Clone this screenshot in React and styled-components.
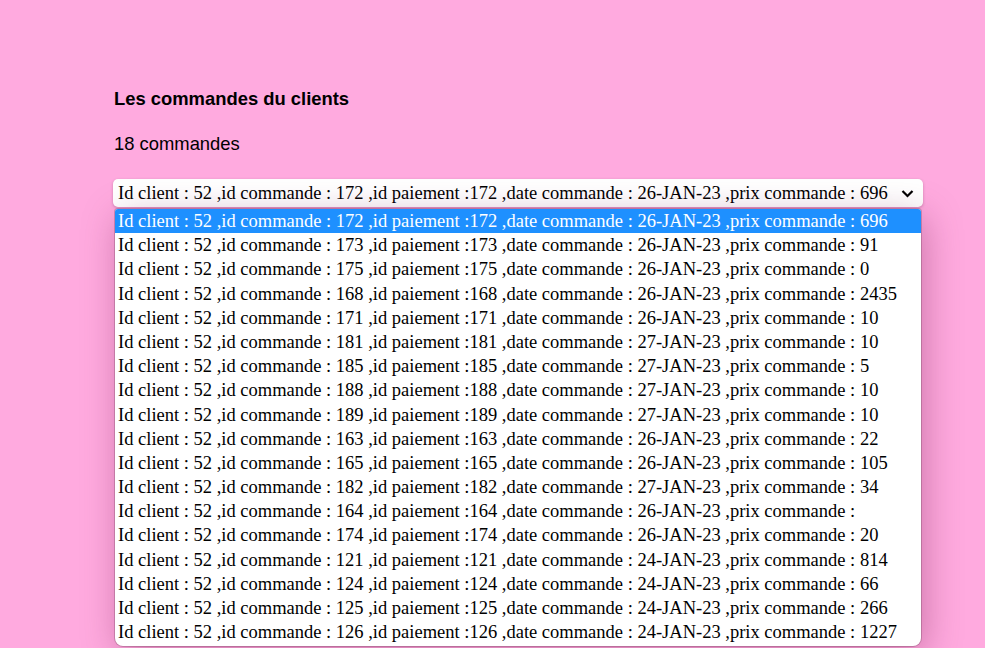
import styled, { createGlobalStyle } from "styled-components";

const GlobalStyle = createGlobalStyle`
  html, body {
    margin: 0;
    padding: 0;
    background: #ffaadf;
    height: 100%;
    overflow: hidden;
  }
`;

const commandes = [
  [172, "26-JAN-23", "696"],
  [173, "26-JAN-23", "91"],
  [175, "26-JAN-23", "0"],
  [168, "26-JAN-23", "2435"],
  [171, "26-JAN-23", "10"],
  [181, "27-JAN-23", "10"],
  [185, "27-JAN-23", "5"],
  [188, "27-JAN-23", "10"],
  [189, "27-JAN-23", "10"],
  [163, "26-JAN-23", "22"],
  [165, "26-JAN-23", "105"],
  [182, "27-JAN-23", "34"],
  [164, "26-JAN-23", ""],
  [174, "26-JAN-23", "20"],
  [121, "24-JAN-23", "814"],
  [124, "24-JAN-23", "66"],
  [125, "24-JAN-23", "266"],
  [126, "24-JAN-23", "1227"],
];

const label = (c) =>
  `Id client : 52 ,id commande : ${c[0]} ,id paiement :${c[0]} ,date commande : ${c[1]} ,prix commande : ${c[2]}`;

const Page = styled.div`
  padding: 88px 0 0 114px;
  font-family: "Liberation Sans", Arial, sans-serif;
  color: #000;
`;

const Title = styled.h3`
  margin: 0;
  font-size: 18.4px;
  font-weight: bold;
  line-height: 22px;
`;

const Count = styled.p`
  margin: 23px 0 0;
  font-size: 18.4px;
  line-height: 22px;
`;

const SelectWrap = styled.div`
  position: relative;
  margin: 24px 0 0 -1px;
  width: 810px;
`;

const SelectBox = styled.div`
  display: flex;
  align-items: center;
  justify-content: space-between;
  height: 28px;
  padding: 0 4px 0 5px;
  box-sizing: border-box;
  background: #fff;
  border-radius: 5px;
  box-shadow: 0 1px 3px rgba(60, 0, 30, 0.25);
  font-family: "Liberation Serif", "Times New Roman", serif;
  font-size: 18.5px;
  white-space: nowrap;
`;

const Chevron = styled.svg`
  width: 13px;
  height: 9px;
  margin-right: 5px;
`;

const List = styled.ul`
  position: absolute;
  top: 30px;
  left: 2px;
  width: 806px;
  margin: 0;
  padding: 0 0 2px;
  list-style: none;
  background: #fff;
  border-radius: 3px 3px 8px 8px;
  box-shadow: 0 0 0 1px rgba(80, 40, 60, 0.25), 4px 8px 36px rgba(110, 20, 70, 0.35);
  overflow: hidden;
`;

const Option = styled.li`
  height: 24.2px;
  line-height: 24px;
  padding-left: 3px;
  font-family: "Liberation Serif", "Times New Roman", serif;
  font-size: 18.5px;
  white-space: nowrap;
  background: ${(p) => (p.$selected ? "#1e90ff" : "transparent")};
  color: ${(p) => (p.$selected ? "#fff" : "#000")};
`;

export default function App() {
  return (
    <>
      <GlobalStyle />
      <Page>
        <Title>Les commandes du clients</Title>
        <Count>18 commandes</Count>
        <SelectWrap>
          <SelectBox>
            <span>{label(commandes[0])}</span>
            <Chevron viewBox="0 0 13 9">
              <path d="M1.5 2 L6.5 7 L11.5 2" fill="none" stroke="#000" strokeWidth="2.2" />
            </Chevron>
          </SelectBox>
          <List>
            {commandes.map((c, i) => (
              <Option key={c[0]} $selected={i === 0}>
                {label(c)}
              </Option>
            ))}
          </List>
        </SelectWrap>
      </Page>
    </>
  );
}
